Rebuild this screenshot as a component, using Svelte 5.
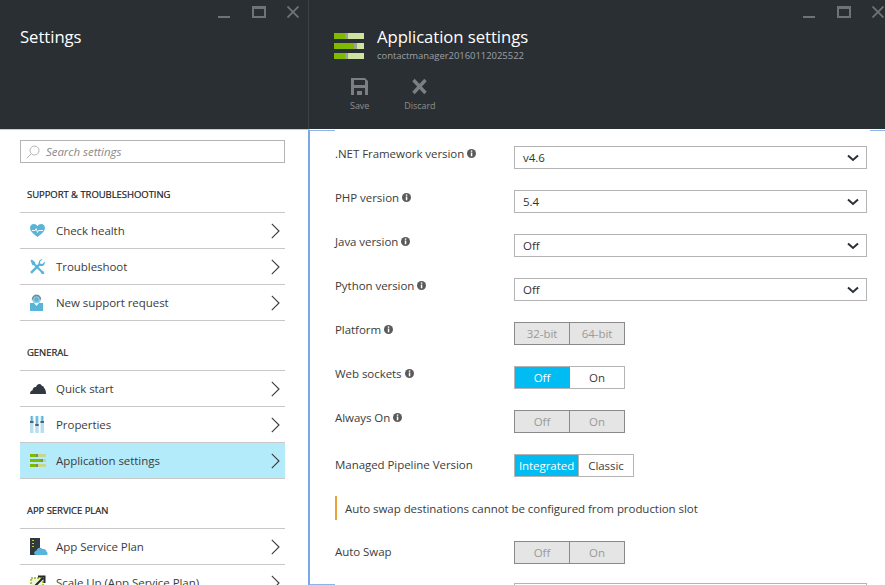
<script>
	const groups = [
		{
			title: 'SUPPORT & TROUBLESHOOTING',
			items: [
				{ label: 'Check health', icon: 'health' },
				{ label: 'Troubleshoot', icon: 'tools' },
				{ label: 'New support request', icon: 'support' }
			]
		},
		{
			title: 'GENERAL',
			items: [
				{ label: 'Quick start', icon: 'cloud' },
				{ label: 'Properties', icon: 'props' },
				{ label: 'Application settings', icon: 'sliders', active: true }
			]
		},
		{
			title: 'APP SERVICE PLAN',
			items: [
				{ label: 'App Service Plan', icon: 'plan' },
				{ label: 'Scale Up (App Service Plan)', icon: 'scale' }
			]
		}
	];

	const versions = [
		{ label: '.NET Framework version', value: 'v4.6' },
		{ label: 'PHP version', value: '5.4' },
		{ label: 'Java version', value: 'Off' },
		{ label: 'Python version', value: 'Off' }
	];

	const toggles = [
		{ label: 'Platform', info: true, a: '32-bit', b: '64-bit', state: 'disabled' },
		{ label: 'Web sockets', info: true, a: 'Off', b: 'On', state: 'on' },
		{ label: 'Always On', info: true, a: 'Off', b: 'On', state: 'disabled' },
		{ label: 'Managed Pipeline Version', a: 'Integrated', b: 'Classic', state: 'on', wide: true }
	];
</script>

{#snippet windowControls()}
	<div class="controls">
		<svg width="12" height="13" viewBox="0 0 12 13"><rect x="0" y="10" width="12" height="2" fill="#6f7377" /></svg>
		<svg width="14" height="12" viewBox="0 0 14 12"><path d="M0 0h14v12H0z M2 3v7h10V3z" fill="#6f7377" fill-rule="evenodd" /></svg>
		<svg class="close" width="12" height="12" viewBox="0 0 12 12"><path d="M.5 .5l11 11M11.500 .5l-11 11" stroke="#6f7377" stroke-width="1.800" fill="none" /></svg>
	</div>
{/snippet}

{#snippet info()}
	<svg class="info" width="9" height="9" viewBox="0 0 9 9">
		<circle cx="4.500" cy="4.500" r="4.500" fill="#5a5a5a" />
		<rect x="3.800" y="1.400" width="1.500" height="1.400" fill="#fff" />
		<rect x="3.800" y="3.500" width="1.500" height="3.800" fill="#fff" />
	</svg>
{/snippet}

{#snippet chevron()}
	<svg class="chev" width="12" height="8" viewBox="0 0 12 8"><path d="M1 1.500l5 4.500 5-4.500" fill="none" stroke="#2a2f36" stroke-width="2" /></svg>
{/snippet}

{#snippet itemIcon(name)}
	{#if name === 'health'}
		<svg width="15" height="13" viewBox="0 0 16 14">
			<path d="M8 14C3 10 0 7.500 0 4.200 0 1.800 1.800 0 4 0c1.700 0 3.100.9 4 2.300C8.900.9 10.300 0 12 0c2.200 0 4 1.800 4 4.200C16 7.500 13 10 8 14z" fill="#59b4d9" />
			<path d="M2 7h3.500l1-2 1.500 4 1.200-2H14" fill="none" stroke="#fff" stroke-width="1" />
		</svg>
	{:else if name === 'tools'}
		<svg width="15" height="15" viewBox="0 0 15 15">
			<path d="M1 13.800L10 4.800" stroke="#59b4d9" stroke-width="2.400" fill="none" />
			<path d="M12.500 .3L10 2.700l.3 2 2 .3 2.400-2.500c.4 2-.5 4.500-3 4.700-1.500.1-3.300-1.500-3.200-3C8.700 1.500 10.700 0 12.500 .3z" fill="#59b4d9" />
			<path d="M.5 1.800L1.800 .5l3.500 3v1.300l7 7 1 .2 1.200 2.200-1.300 1.300-2.200-1.200-.2-1-7-7H2.500z" fill="#59b4d9" />
		</svg>
	{:else if name === 'support'}
		<svg width="13" height="17" viewBox="0 0 13 17">
			<rect x="0" y="9" width="13" height="8" fill="#59b4d9" />
			<circle cx="6.500" cy="5" r="4.500" fill="#8fd0e8" />
			<path d="M2.500 5.500a4 4 0 0 1 8 0" fill="none" stroke="#7a858c" stroke-width="1.500" />
			<circle cx="6.500" cy="5.500" r="2.200" fill="#59b4d9" />
			<path d="M4 9l2.500 3L9 9z" fill="#fff" />
		</svg>
	{:else if name === 'cloud'}
		<svg width="16" height="10" viewBox="0 0 16 10">
			<path d="M0 10c0-2 .9-3.500 2.500-3.800C3 3.500 4.500 2.500 6 3c.5-1.800 2-3 3.500-3 1.200 0 2 .8 2.500 2 1-.2 2 .5 2 2 1.200.6 2 2.800 2 6z" fill="#32383f" />
		</svg>
	{:else if name === 'props'}
		<svg width="14" height="17" viewBox="0 0 14 17">
			<rect x="0" width="3.500" height="17" fill="#b7dfef" />
			<rect x="5.200" width="3.500" height="17" fill="#b7dfef" />
			<rect x="10.500" width="3.500" height="17" fill="#b7dfef" />
			<rect x="1" width="1.500" height="5" fill="#59b4d9" />
			<rect x="6.200" width="1.500" height="8" fill="#59b4d9" />
			<rect x="11.500" width="1.500" height="5" fill="#59b4d9" />
			<rect x="0" y="5" width="3.500" height="2" fill="#59606a" />
			<rect x="5.200" y="8" width="3.500" height="2" fill="#59606a" />
			<rect x="10.500" y="5" width="3.500" height="2" fill="#59606a" />
		</svg>
	{:else if name === 'sliders'}
		<svg width="16" height="13" viewBox="0 0 16 13">
			<rect y="0" width="16" height="3" fill="#c4d98c" />
			<rect y="0" width="6" height="3" fill="#7fb900" />
			<rect x="6" y="0" width="2" height="3" fill="#7f8a66" />
			<rect y="5" width="16" height="3" fill="#c4d98c" />
			<rect y="5" width="11" height="3" fill="#7fb900" />
			<rect x="11" y="5" width="2" height="3" fill="#7f8a66" />
			<rect y="10" width="16" height="3" fill="#c4d98c" />
			<rect y="10" width="6" height="3" fill="#7fb900" />
			<rect x="6" y="10" width="2" height="3" fill="#7f8a66" />
		</svg>
	{:else if name === 'plan'}
		<svg width="18" height="17" viewBox="0 0 18 17">
			<rect x="0" y="0" width="10" height="17" fill="#32383f" />
			<rect x="2" y="2" width="2" height="1" fill="#b8d432" />
			<rect x="2" y="5" width="2" height="1" fill="#b8d432" />
			<rect x="2" y="8" width="2" height="1" fill="#b8d432" />
			<path d="M6 17c-2 0-3-3.500 .5-4.500C7 10 10.500 8.500 12.500 11c2.500-.5 4 1 4 2.800 1.200.6 1.500 2.200.5 3.200z" fill="#59b4d9" />
		</svg>
	{:else}
		<svg width="16" height="16" viewBox="0 0 16 16">
			<rect x="1" y="3" width="12" height="12" fill="#eef4d8" stroke="#a9c752" stroke-width="2" stroke-dasharray="2 1" />
			<path d="M5 11l8-8M8 1.500h6.500V8" fill="none" stroke="#26292c" stroke-width="2" />
		</svg>
	{/if}
{/snippet}

<div class="app">
	<aside class="settings">
		<header class="head side-head">
			{@render windowControls()}
			<h1>Settings</h1>
		</header>
		<div class="list">
			<div class="search">
				<svg width="14" height="14" viewBox="0 0 14 14"><circle cx="8.500" cy="5.500" r="4.500" fill="none" stroke="#b5b5b5" /><path d="M5.200 8.800L.8 13.200" stroke="#b5b5b5" /></svg>
				<span>Search settings</span>
			</div>
			{#each groups as group}
				<h2>{group.title}</h2>
				<ul>
					{#each group.items as item}
						<li class:active={item.active}>
							<span class="icon">{@render itemIcon(item.icon)}</span>
							<span class="label">{item.label}</span>
							<svg width="9" height="16" viewBox="0 0 9 16"><path d="M.8.8L8 8 .8 15.200" fill="none" stroke="#3a3a3a" stroke-width="1.100" /></svg>
						</li>
					{/each}
				</ul>
			{/each}
		</div>
	</aside>

	<main class="blade">
		<header class="head main-head">
			{@render windowControls()}
			<div class="title">
				<svg width="30" height="26" viewBox="0 0 30 26">
					<rect y="0" width="30" height="6" fill="#cfe3a0" />
					<rect y="0" width="11" height="6" fill="#7fb900" />
					<rect x="11" y="0" width="3" height="6" fill="#9aa58a" />
					<rect y="10" width="30" height="6" fill="#cfe3a0" />
					<rect y="10" width="20" height="6" fill="#7fb900" />
					<rect x="20" y="10" width="3" height="6" fill="#9aa58a" />
					<rect y="20" width="30" height="6" fill="#cfe3a0" />
					<rect y="20" width="11" height="6" fill="#7fb900" />
					<rect x="11" y="20" width="3" height="6" fill="#9aa58a" />
				</svg>
				<div>
					<h1>Application settings</h1>
					<p>contactmanager20160112025522</p>
				</div>
			</div>
			<div class="commands">
				<div class="cmd">
					<svg width="17" height="17" viewBox="0 0 17 17"><path d="M0 0h14l3 3v14H0z M3 2v5h11V2z M3 10v7h3v-4h5v4h3v-7z" fill="#7b7f83" fill-rule="evenodd" /></svg>
					<span>Save</span>
				</div>
				<div class="cmd">
					<svg width="15" height="17" viewBox="0 0 15 17"><path d="M1.500 2l12 13M13.500 2l-12 13" stroke="#7b7f83" stroke-width="3.400" fill="none" /></svg>
					<span>Discard</span>
				</div>
			</div>
		</header>

		<div class="form">
			{#each versions as v}
				<div class="row">
					<div class="name">{v.label} {@render info()}</div>
					<div class="select"><span>{v.value}</span>{@render chevron()}</div>
				</div>
			{/each}
			{#each toggles as t}
				<div class="row">
					<div class="name">{t.label} {#if t.info}{@render info()}{/if}</div>
					<div class="toggle {t.state}" class:wide={t.wide}>
						<span class="first">{t.a}</span><span>{t.b}</span>
					</div>
				</div>
			{/each}
			<div class="note">Auto swap destinations cannot be configured from production slot</div>
			<div class="row swap">
				<div class="name">Auto Swap</div>
				<div class="toggle disabled"><span class="first">Off</span><span>On</span></div>
			</div>
			<div class="row"><div class="name"></div><div class="select"></div></div>
		</div>
	</main>
</div>

<style>
	:global(body) {
		margin: 0;
	}

	.app {
		display: grid;
		grid-template-columns: 309px 1fr;
		width: 885px;
		height: 585px;
		overflow: hidden;
		font-family: 'Open Sans', 'Liberation Sans', sans-serif;
		font-size: 11.500px;
		letter-spacing: -0.05px;
		color: #3c3c3c;
		background: #fff;
	}

	.head {
		position: relative;
		height: 129px;
		box-sizing: border-box;
		background: #2a2f33;
		color: #fff;
		padding: 27px 20px 0;
		flex: none;
	}

	.head h1 {
		margin: 0;
		font-size: 16.700px;
		font-weight: 400;
		line-height: 20px;
	}

	.controls {
		position: absolute;
		top: 6px;
		right: 1px;
		display: flex;
		gap: 22px;
	}

	.controls .close {
		margin-left: -1px;
	}

	.side-head .controls {
		right: 10px;
	}

	.settings {
		display: flex;
		flex-direction: column;
		min-width: 0;
	}

	.list {
		border-top: 1px solid #c8ccd0;
		padding: 10px 24px 0 20px;
	}

	.search {
		height: 21px;
		border: 1px solid #b4b4b4;
		display: flex;
		align-items: center;
		gap: 6px;
		padding-left: 5px;
		font-style: italic;
		color: #8a8a8a;
		font-size: 11.500px;
	}

	h2 {
		margin: 0;
		height: 41px;
		padding: 0 0 11px 7px;
		font-size: 9.500px;
		font-weight: 400;
		line-height: 12px;
		color: #222;
		display: flex;
		align-items: flex-end;
		box-sizing: border-box;
		-webkit-text-stroke: 0.2px #222;
	}

	ul {
		list-style: none;
		margin: 0 0 8px;
		padding: 0;
		border-top: 1px solid #c8c8c8;
	}

	.search + h2 {
		height: 49px;
	}

	li {
		height: 35px;
		border-bottom: 1px solid #c8c8c8;
		display: flex;
		align-items: center;
		padding-right: 5px;
	}

	li.active {
		background: #b3ebfb;
	}

	.icon {
		width: 36px;
		padding-left: 10px;
		box-sizing: border-box;
		display: flex;
		align-items: center;
	}

	.label {
		flex: 1;
		white-space: nowrap;
	}

	.blade {
		display: flex;
		flex-direction: column;
		min-width: 0;
		border-left: 1px solid #3c4145;
		margin-left: -1px;
		position: relative;
	}

	.main-head {
		padding: 25px 0 0 25px;
	}

	.title {
		display: flex;
		gap: 13px;
		align-items: flex-start;
	}

	.title > svg {
		margin-top: 8px;
	}

	.main-head h1 {
		line-height: 24px;
	}

	.main-head p {
		margin: 0;
		font-size: 9.500px;
		color: #9aa0a6;
		line-height: 14px;
	}

	.commands {
		display: flex;
		margin-top: 15px;
		gap: 35px;
		padding-left: 16px;
	}

	.cmd {
		display: flex;
		flex-direction: column;
		align-items: center;
		gap: 4px;
		font-size: 9px;
		color: #8a8e92;
	}

	.form {
		flex: 1;
		border-left: 2px solid #7aa7e8;
		border-top: 1px solid #fff;
		padding: 16px 18px 0 25px;
		margin-left: -1px;
		position: relative;
		overflow: hidden;
	}

	.form::before,
	.form::after {
		content: '';
		position: absolute;
		top: -1px;
		height: 2px;
		background: #8fb4ea;
	}

	.form::before {
		left: 0;
		width: 25px;
		box-shadow: 0 455px 0 #8fb4ea;
	}

	.form::after {
		right: 0;
		width: 15px;
	}

	.row {
		display: grid;
		grid-template-columns: 179px 1fr;
		height: 23px;
		margin-bottom: 21px;
		align-items: start;
	}

	.row.swap {
		margin-bottom: 19px;
	}

	.name {
		display: flex;
		align-items: center;
		gap: 3px;
		height: 15px;
		white-space: nowrap;
	}

	.row:nth-last-child(4) .name,
	.row:nth-last-child(2) .name {
		height: 21px;
	}

	.select {
		box-sizing: border-box;
		height: 23px;
		border: 1px solid #b4b4b4;
		padding: 0 7px 0 8px;
		display: flex;
		align-items: center;
		justify-content: space-between;
		color: #333;
	}

	.toggle {
		display: inline-flex;
		width: 111px;
		height: 23px;
		box-sizing: border-box;
		border: 1px solid #b4b4b4;
		text-align: center;
		line-height: 21px;
	}

	.toggle.wide {
		width: 120px;
	}

	.toggle span {
		flex: 1;
	}

	.toggle .first {
		flex: none;
		width: 54px;
		border-right: 1px solid #8a8a8a;
	}

	.toggle.wide .first {
		width: 63px;
		border-right-color: #b4b4b4;
	}

	.toggle.on .first {
		background: #00bcf2;
		color: #fff;
	}

	.toggle.disabled {
		background: #e5e5e5;
		border-color: #8a8a8a;
		color: #9a9a9a;
	}

	.note {
		height: 24px;
		margin: -2px 0 21px;
		border-left: 2px solid #e8a33d;
		padding-left: 8px;
		line-height: 26px;
		white-space: nowrap;
	}
</style>
